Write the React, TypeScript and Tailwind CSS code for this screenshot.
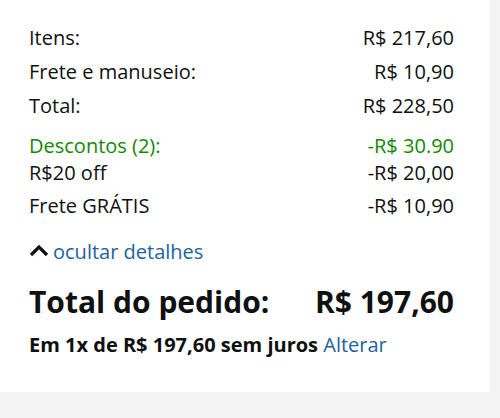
import React from "react";

function Row({ label, value, className = "" }: { label: string; value: string; className?: string }) {
  return (
    <div className={`flex justify-between h-[24px] leading-[24px] text-[20px] ${className}`}>
      <span>{label}</span>
      <span>{value}</span>
    </div>
  );
}

export default function App() {
  return (
    <div className="w-[500px] h-[418px] bg-[#f3f3f3] font-['Open_Sans',sans-serif] text-[#0f1111]">
      <div className="w-[490px] h-[392px] bg-white pl-[29px] pr-[36px] pt-[26px] flex flex-col">
        <Row label="Itens:" value="R$ 217,60" />
        <Row label="Frete e manuseio:" value="R$ 10,90" className="mt-[10px]" />
        <Row label="Total:" value="R$ 228,50" className="mt-[10px]" />
        <Row label="Descontos (2):" value="-R$ 30.90" className="mt-[16px] text-[#108a00]" />
        <Row label="R$20 off" value="-R$ 20,00" className="mt-[3px]" />
        <Row label="Frete GRÁTIS" value="-R$ 10,90" className="mt-[9px]" />
        <div className="mt-[22px] h-[24px] flex items-center gap-[4px]">
          <svg width="20" height="13" viewBox="0 0 20 13" className="shrink-0 mt-[-3px]">
            <path d="M2 11 L10 3 L18 11" fill="none" stroke="#0f1111" strokeWidth="3.2" strokeLinecap="butt" strokeLinejoin="miter" />
          </svg>
          <span className="text-[20px] leading-[24px] text-[#2162a1]">ocultar detalhes</span>
        </div>
        <div className="mt-[20px] h-[36px] flex justify-between text-[30px] leading-[36px] font-bold">
          <span>Total do pedido:</span>
          <span>R$ 197,60</span>
        </div>
        <div className="mt-[13px] h-[24px] text-[20px] leading-[24px] whitespace-nowrap">
          <span className="font-bold">Em 1x de R$ 197,60 sem juros</span>{" "}
          <span className="text-[#2162a1]">Alterar</span>
        </div>
      </div>
    </div>
  );
}
